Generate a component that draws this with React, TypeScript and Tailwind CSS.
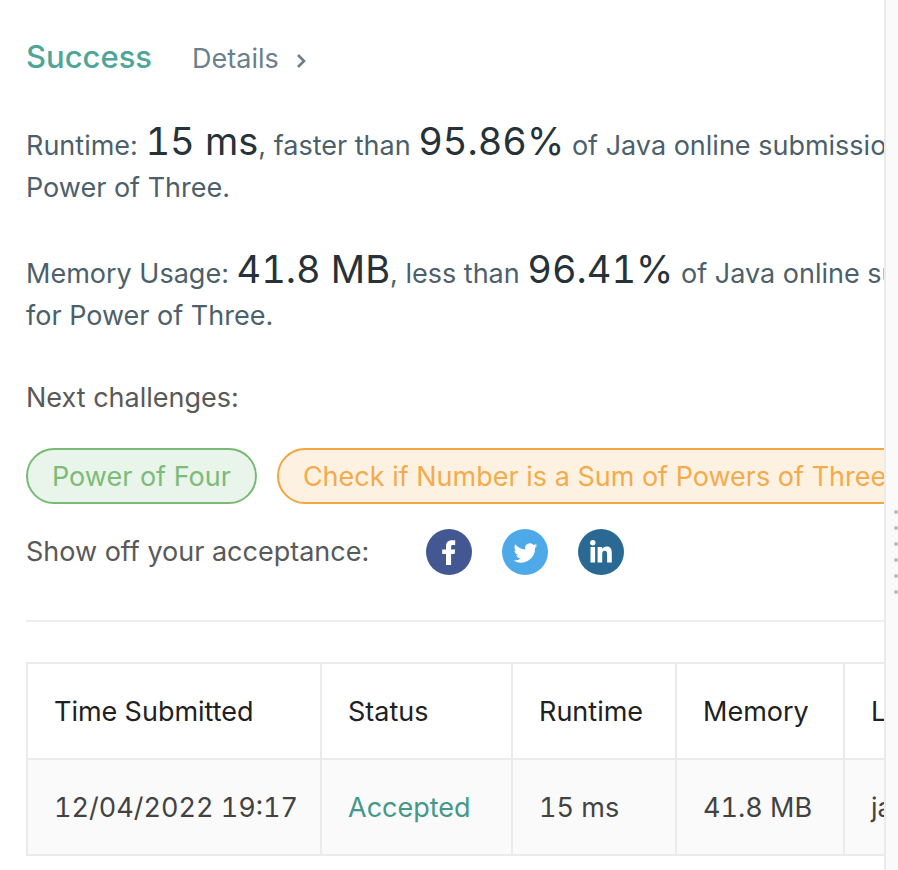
import type { ReactNode } from "react";

const columns = ["Time Submitted", "Status", "Runtime", "Memory", "Language"];
const columnWidths = ["w-[294px]", "w-[191px]", "w-[164px]", "w-[168px]", "w-auto"];

function Figure({ children }: { children: ReactNode }) {
  return <span className="text-[38px] leading-none tabular-nums text-[#263238]">{children}</span>;
}

function ShareButton({ label, color, children }: { label: string; color: string; children: ReactNode }) {
  return (
    <button type="button" aria-label={label} className={`flex size-[46px] items-center justify-center rounded-full ${color}`}>
      <svg viewBox="0 0 46 46" className="size-full" fill="white" aria-hidden="true">
        {children}
      </svg>
    </button>
  );
}

export default function App() {
  return (
    <div className="flex h-screen overflow-hidden bg-white font-[Inter,sans-serif] text-[27px] leading-[42px] text-[#546e7a]">
      <main className="min-w-0 flex-1 overflow-hidden pt-9 pl-[26px]">
        <div className="w-[1010px]">
          <header className="flex items-baseline gap-10">
            <h1 className="text-[31px] font-medium text-[#4fa598]">Success</h1>
            <a href="#details" className="flex items-center gap-4 text-[#6b7f8c]">
              Details
              <svg viewBox="0 0 12 16" className="mt-1 h-4 w-3" fill="none" stroke="currentColor" strokeWidth="2.6" aria-hidden="true">
                <path d="M3 2l6 6-6 6" />
              </svg>
            </a>
          </header>

          <p className="mt-[42px] text-[#4d5f6a]">
            Runtime: <Figure>15 ms</Figure>, faster than <Figure>95.86%</Figure> of Java online submissions for Power of Three.
          </p>
          <p className="mt-[41px] text-[#4d5f6a]">
            Memory Usage: <Figure>41.8 MB</Figure>, less than <Figure>96.41%</Figure> of Java online submissions for Power of Three.
          </p>

          <h2 className="mt-10 text-[#595959]">Next challenges:</h2>
          <div className="mt-[29px] flex gap-5 whitespace-nowrap">
            <a href="#power-of-four" className="rounded-full border-2 border-[#79b974] bg-[#e9f4ea] px-6 pt-1.5 pb-1 text-[#7dbb78]">
              Power of Four
            </a>
            <a href="#powers-of-three" className="rounded-full border-2 border-[#f2a541] bg-[#fdf2e2] px-6 pt-1.5 pb-1 text-[#f3ab4c]">
              Check if Number is a Sum of Powers of Three
            </a>
          </div>

          <div className="mt-[25px] flex items-center">
            <span className="w-[400px] text-[#595959]">Show off your acceptance:</span>
            <div className="flex gap-[30px]">
              <ShareButton label="Share on Facebook" color="bg-[#435892]">
                <path d="M20 36V25h-3.800v-4.600H20v-3c0-4 2-6.100 6-6.100h3.200v4.600h-2c-1.600 0-2.100.6-2.100 2v2.500h4.100l-.6 4.600h-3.500V36z" />
              </ShareButton>
              <ShareButton label="Share on Twitter" color="bg-[#4ea9e8]">
                <path transform="translate(11.500 12)" d="M24 4.600a10 10 0 0 1-2.800.8 4.900 4.900 0 0 0 2.100-2.700 9.900 9.900 0 0 1-3.100 1.200 4.900 4.900 0 0 0-8.400 4.500A14 14 0 0 1 1.700 3.200a4.900 4.900 0 0 0 1.500 6.500 4.900 4.900 0 0 1-2.200-.6 4.900 4.900 0 0 0 3.900 4.900 5 5 0 0 1-2.200.1 4.900 4.900 0 0 0 4.600 3.400A9.900 9.900 0 0 1 0 19.500 14 14 0 0 0 21.500 7.100 10 10 0 0 0 24 4.600z" />
              </ShareButton>
              <ShareButton label="Share on LinkedIn" color="bg-[#2b6995]">
                <circle cx="14.800" cy="13.700" r="2.700" />
                <path d="M12.500 18h4.600v15.600h-4.600zM19.600 18h4.400v2.100c.9-1.600 2.500-2.500 4.700-2.500 4 0 5.100 2.700 5.100 6.900v9.100h-4.700v-8.200c0-2.400-.5-3.700-2.300-3.700-1.900 0-2.600 1.400-2.600 3.700v8.200h-4.600z" />
              </ShareButton>
            </div>
          </div>

          <hr className="mt-[45px] border-t-2 border-[#eeeeee]" />

          <table className="mt-10 w-full table-fixed border-collapse text-left tabular-nums">
            <thead>
              <tr>
                {columns.map((column, i) => (
                  <th key={column} className={`${columnWidths[i]} h-24 border-2 border-[#ebebeb] px-[26px] pt-0.5 font-normal text-[#212121]`}>
                    {column}
                  </th>
                ))}
              </tr>
            </thead>
            <tbody>
              <tr className="bg-[#fafafa] text-[#424242]">
                <td className="h-24 border-2 border-[#ebebeb] px-[26px] pt-0.5 whitespace-nowrap">12/04/2022 19:17</td>
                <td className="border-2 border-[#ebebeb] px-[26px] pt-0.5">
                  <a href="#accepted" className="text-[#43988a]">Accepted</a>
                </td>
                <td className="border-2 border-[#ebebeb] px-[26px] pt-0.5">15 ms</td>
                <td className="border-2 border-[#ebebeb] px-[26px] pt-0.5">41.8 MB</td>
                <td className="border-2 border-[#ebebeb] px-[26px] pt-0.5">java</td>
              </tr>
            </tbody>
          </table>
        </div>
      </main>
      <aside aria-label="Resize panel" className="flex w-[14px] shrink-0 flex-col items-end gap-3 border-l-2 border-[#ebebeb] bg-[#fafafa] pt-[510px]">
        {[0, 1, 2, 3, 4, 5].map((dot) => (
          <span key={dot} className="size-1 rounded-full bg-[#b0bec5]" />
        ))}
      </aside>
    </div>
  );
}
